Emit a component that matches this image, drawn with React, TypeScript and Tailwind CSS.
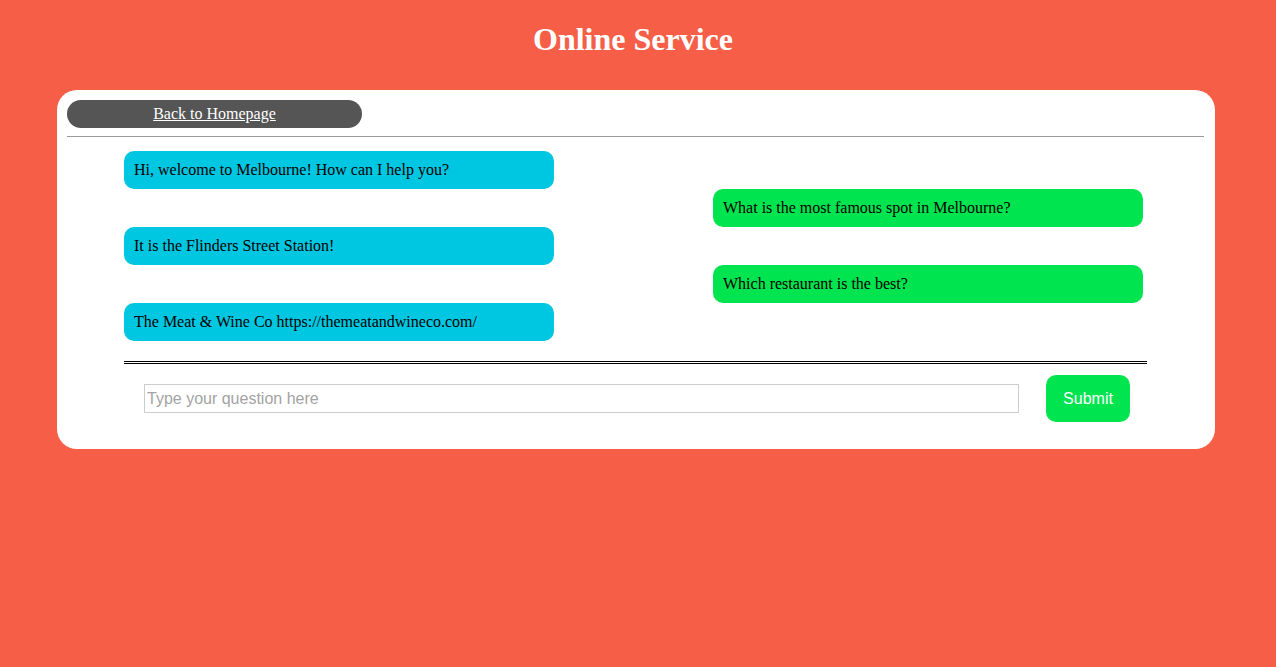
import React from 'react'

type Msg = { from: 'bot' | 'user'; text: string }

const messages: Msg[] = [
  { from: 'bot', text: 'Hi, welcome to Melbourne! How can I help you?' },
  { from: 'user', text: 'What is the most famous spot in Melbourne?' },
  { from: 'bot', text: 'It is the Flinders Street Station!' },
  { from: 'user', text: 'Which restaurant is the best?' },
  { from: 'bot', text: 'The Meat & Wine Co https://themeatandwineco.com/' },
]

const Bubble = ({ msg }: { msg: Msg }) => (
  <div className={msg.from === 'bot' ? 'flex h-[38px]' : 'flex h-[38px] pl-[589px]'}>
    <div
      className={
        msg.from === 'bot'
          ? 'flex w-[430px] items-center rounded-[10px] bg-[#00c7e1] pl-[10px] text-[16px] text-black'
          : 'flex w-[430px] items-center rounded-[10px] bg-[#00e54f] pl-[10px] text-[16px] text-black'
      }
    >
      {msg.text}
    </div>
  </div>
)

export default function App() {
  return (
    <div className="min-h-screen bg-[#f65e48] pt-[21px] font-['Liberation_Serif','Times_New_Roman',serif]">
      <h1 className="pr-[10px] text-center text-[32px] font-bold leading-[37px] text-white">Online Service</h1>

      <div className="ml-[57px] mt-[32px] w-[1158px] rounded-[20px] bg-white p-[10px] pb-[27px]">
        <a
          href="#"
          className="flex h-[28px] w-[295px] items-center justify-center rounded-full bg-[#555555] text-[16px] text-white underline"
        >
          Back to Homepage
        </a>
        <div className="mr-[1px] mt-[8px] h-px bg-[#9a9a9a]" />

        <div className="ml-[57px] mt-[14px] w-[1023px]">
          {messages.map((m, i) => (
            <Bubble key={i} msg={m} />
          ))}

          <div className="mt-[20px] h-[3px] border-t-[3px] border-double border-black" />

          <div className="mt-[11px] flex items-center pl-[20px]">
            <input
              type="text"
              placeholder="Type your question here"
              className="h-[29px] w-[875px] border border-[#cccccc] px-[2px] font-['Liberation_Sans',Arial,sans-serif] text-[16px] text-black outline-none placeholder:text-[#a3a3a3]"
            />
            <button className="ml-[27px] h-[47px] w-[84px] rounded-[10px] bg-[#00e54f] font-['Liberation_Sans',Arial,sans-serif] text-[16px] text-white">
              Submit
            </button>
          </div>
        </div>
      </div>
    </div>
  )
}
